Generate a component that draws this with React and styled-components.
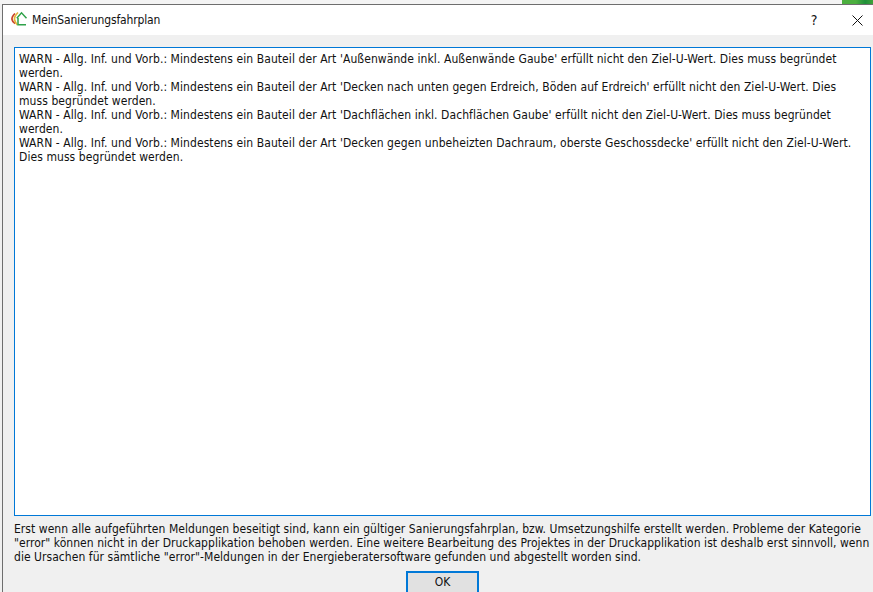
import React from "react";
import styled, { createGlobalStyle } from "styled-components";

const Global = createGlobalStyle`
  html, body { margin: 0; padding: 0; width: 873px; height: 592px; overflow: hidden; background: #f0f0f0; }
  * { box-sizing: border-box; }
`;
const Desktop = styled.div`
  width: 873px; height: 592px; display: flex; flex-direction: column; overflow: hidden;
  font-family: "DejaVu Sans Condensed", "DejaVu Sans", sans-serif; font-stretch: condensed; color: #111;
`;
const Backdrop = styled.div`
  height: 4px; flex: none; display: flex; justify-content: flex-end; background: #f4f4f4;
`;
const Accent = styled.div`
  width: 31px; background: linear-gradient(90deg, #4caf3f 0%, #4caf3f 45%, #1f8f3a 75%, #3fa33a 100%);
`;
const Dialog = styled.div`
  flex: 1; margin-left: 2px; display: flex; flex-direction: column; min-height: 0;
  border-top: 1px solid #6e6e6e; border-left: 1px solid #6e6e6e; background: #f0f0f0;
`;
const TitleBar = styled.div`
  height: 30px; flex: none; background: #fff; display: flex; align-items: center; padding-left: 7px;
`;
const AppIcon = styled.svg`
  width: 18px; height: 18px; flex: none; margin-right: 4px; margin-bottom: 2px;
`;
const Title = styled.div`
  font-size: 12px; flex: 1; padding-bottom: 1px; letter-spacing: -0.14px;
`;
const HelpButton = styled.div`
  width: 56px; height: 30px; display: flex; align-items: center; justify-content: center; font-size: 14px;
`;
const CloseButton = styled.div`
  width: 31px; height: 30px; display: flex; align-items: center; justify-content: center;
`;
const Body = styled.div`
  flex: 1; display: flex; flex-direction: column; padding: 12px 2px 0 11px; min-height: 0;
`;
const LogBox = styled.div`
  height: 469px; flex: none; background: #fff; border: 1px solid #0078d7; padding: 4px 4px;
  font-size: 12px; line-height: 14px; letter-spacing: 0.075px;
`;
const Note = styled.div`
  margin-top: 6px; font-size: 12px; line-height: 14px; letter-spacing: 0.045px;
`;
const Footer = styled.div`
  display: flex; justify-content: center; margin-top: 7px;
`;
const OkButton = styled.button`
  width: 73px; height: 23px; background: #e1e1e1; border: 2px solid #0078d7; font: inherit; font-size: 12px; color: #111; padding: 0 0 1px;
`;

const lines = [
  "WARN - Allg. Inf. und Vorb.: Mindestens ein Bauteil der Art 'Außenwände inkl. Außenwände Gaube' erfüllt nicht den Ziel-U-Wert. Dies muss begründet werden.",
  "WARN - Allg. Inf. und Vorb.: Mindestens ein Bauteil der Art 'Decken nach unten gegen Erdreich, Böden auf Erdreich' erfüllt nicht den Ziel-U-Wert. Dies muss begründet werden.",
  "WARN - Allg. Inf. und Vorb.: Mindestens ein Bauteil der Art 'Dachflächen inkl. Dachflächen Gaube' erfüllt nicht den Ziel-U-Wert. Dies muss begründet werden.",
  "WARN - Allg. Inf. und Vorb.: Mindestens ein Bauteil der Art 'Decken gegen unbeheizten Dachraum, oberste Geschossdecke' erfüllt nicht den Ziel-U-Wert. Dies muss begründet werden.",
];

export default function App() {
  return (
    <Desktop>
      <Global />
      <Backdrop><Accent /></Backdrop>
      <Dialog>
        <TitleBar>
          <AppIcon viewBox="0 0 18 18" fill="none">
            <path d="M5 3.5 Q1.5 7 2 9.5 Q2.5 12 5 13.5" stroke="#c9442a" strokeWidth="1.7" />
            <path d="M8 2.5 Q4 6.5 4.5 9.5 Q5 12.5 7.5 15" stroke="#e3b53a" strokeWidth="1.7" />
            <path d="M6.8 8.2 L11.5 2.8 L16.5 8.2 M8 8 V14.8 H16" stroke="#2fa24a" strokeWidth="1.5" />
          </AppIcon>
          <Title>MeinSanierungsfahrplan</Title>
          <HelpButton>?</HelpButton>
          <CloseButton>
            <svg width="11" height="11" viewBox="0 0 11 11"><path d="M0.5 0.5 L10.5 10.5 M10.5 0.5 L0.5 10.5" stroke="#111" strokeWidth="1" /></svg>
          </CloseButton>
        </TitleBar>
        <Body>
          <LogBox>
            {lines.map((l) => <div key={l}>{l}</div>)}
          </LogBox>
          <Note>
            Erst wenn alle aufgeführten Meldungen beseitigt sind, kann ein gültiger Sanierungsfahrplan, bzw. Umsetzungshilfe erstellt werden. Probleme der Kategorie "error" können nicht in der Druckapplikation behoben werden. Eine weitere Bearbeitung des Projektes in der Druckapplikation ist deshalb erst sinnvoll, wenn die Ursachen für sämtliche "error"-Meldungen in der Energieberatersoftware gefunden und abgestellt worden sind.
          </Note>
          <Footer><OkButton>OK</OkButton></Footer>
        </Body>
      </Dialog>
    </Desktop>
  );
}
